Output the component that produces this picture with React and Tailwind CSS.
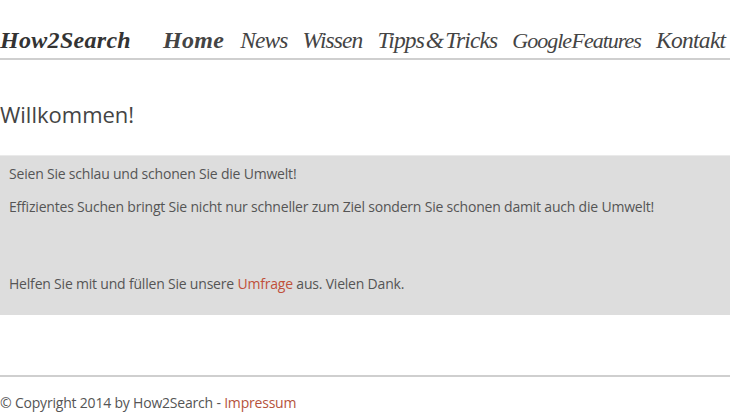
import React from 'react';

const navItems = [
  { label: 'News', cls: 'text-[23.5px] tracking-[-0.9px]' },
  { label: 'Wissen', cls: 'text-[23.5px] tracking-[-0.9px]' },
  { label: 'Tipps & Tricks', cls: 'text-[23.5px] tracking-[-0.9px] [word-spacing:-3px]' },
  { label: 'Google Features', cls: 'text-[22px] tracking-[-1px] [word-spacing:-4px]' },
  { label: 'Kontakt', cls: 'text-[23.5px] tracking-[-0.7px]' },
];

const App = () => {
  return (
    <div className="min-h-screen bg-white text-[#555]" style={{ fontFamily: '"Open Sans", sans-serif' }}>
      {/* Header */}
      <header className="border-b-2 border-[#cfcfcf]">
        <nav
          className="flex items-end h-[58px] pb-[6px] italic text-[#444] leading-none whitespace-nowrap"
          style={{ fontFamily: '"Liberation Serif", serif' }}
        >
          <a className="shrink-0 font-bold text-[#333] text-[24px] tracking-[0.3px] mr-[32px]">How2Search</a>
          <a className="shrink-0 font-bold text-[24px] tracking-[0.3px] mr-[16px]">Home</a>
          {navItems.map((item) => (
            <a key={item.label} className={`shrink-0 mr-[15px] last:mr-0 ${item.cls}`}>
              {item.label}
            </a>
          ))}
        </nav>
      </header>

      {/* Main Content */}
      <main>
        <h1 className="text-[22px] text-[#444] leading-[32px] mt-[38px] mb-[25px]">Willkommen!</h1>

        <div className="bg-[#dddddd] border-t border-[#eaeaea] px-[9px] pt-[8px] pb-[8px] text-[14px] leading-[20px] tracking-[-0.2px]">
          <p className="mb-[13px]">Seien Sie schlau und schonen Sie die Umwelt!</p>
          <p className="mb-[13px]">
            Effizientes Suchen bringt Sie nicht nur schneller zum Ziel sondern Sie schonen damit auch die Umwelt!
          </p>
          <div className="h-[44px]" />
          <p className="mb-[13px]">
            Helfen Sie mit und füllen Sie unsere <a className="text-[#c0503a]">Umfrage</a> aus. Vielen Dank.
          </p>
        </div>
      </main>

      {/* Footer */}
      <footer className="mt-[60px] border-t-2 border-[#cfcfcf] pt-[16px] text-[14px] leading-[20px] tracking-[-0.2px]">
        © Copyright 2014 by How2Search - <a className="text-[#b5533c]">Impressum</a>
      </footer>
    </div>
  );
};

export default App;
